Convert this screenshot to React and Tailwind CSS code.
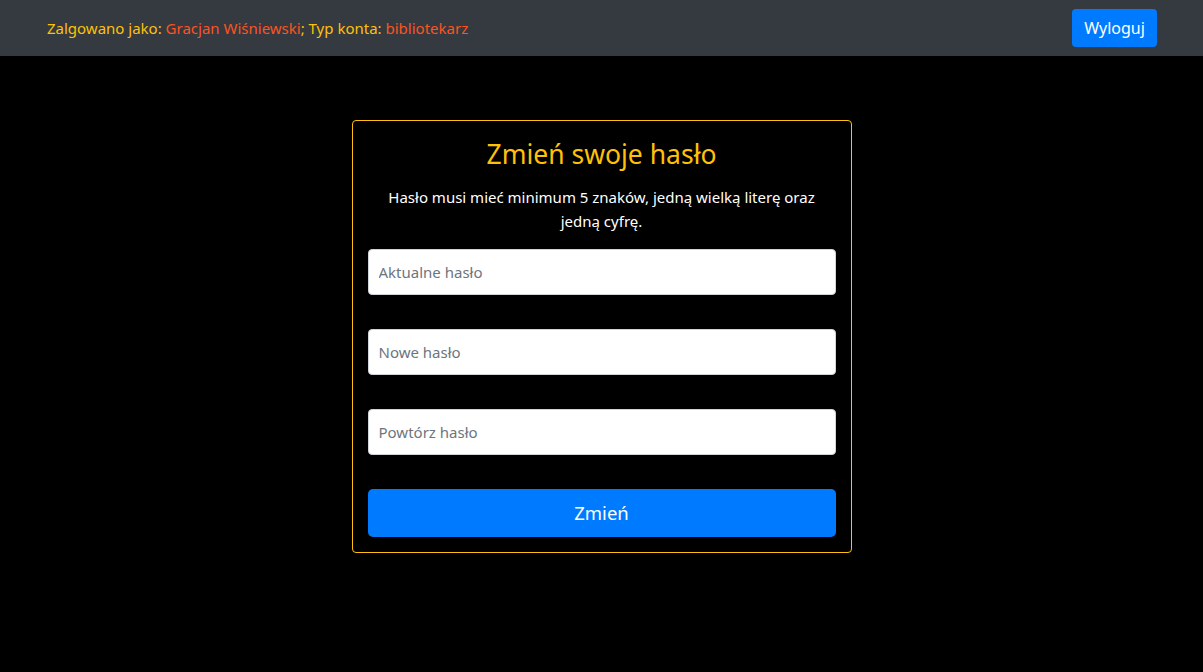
export default function App() {
  const font = { fontFamily: '"Noto Sans", "Open Sans", sans-serif' };
  return (
    <div className="min-h-[672px] bg-black" style={font}>
      <header className="h-14 bg-[#343a40] flex items-center justify-between pl-[47px] pr-[46px]">
        <div className="text-[15px] text-[#ffc107]">
          Zalgowano jako: <span className="text-[#fd5321]">Gracjan Wiśniewski</span>; Typ konta: <span className="text-[#fd5321]">bibliotekarz</span>
        </div>
        <button className="h-[38px] w-[85px] bg-[#007bff] text-white text-[16px] rounded-[4px]">Wyloguj</button>
      </header>
      <div className="flex justify-center pt-16">
        <div className="w-[500px] border border-[#ffc107] rounded-[4px] px-[15px] pt-[16px] pb-[15px]">
          <h3 className="text-[26.5px] leading-[34px] text-[#ffc107] text-center mb-[14px]">Zmień swoje hasło</h3>
          <p className="text-[15px] leading-6 text-white text-center mb-4 px-4">Hasło musi mieć minimum 5 znaków, jedną wielką literę oraz jedną cyfrę.</p>
          <div className="flex flex-col gap-[34px]">
            <input type="password" placeholder="Aktualne hasło" className="h-[46px] w-full bg-white border border-[#ced4da] rounded-[4px] px-[10px] text-[15px] placeholder:text-[#6c757d] outline-none" />
            <input type="password" placeholder="Nowe hasło" className="h-[46px] w-full bg-white border border-[#ced4da] rounded-[4px] px-[10px] text-[15px] placeholder:text-[#6c757d] outline-none" />
            <input type="password" placeholder="Powtórz hasło" className="h-[46px] w-full bg-white border border-[#ced4da] rounded-[4px] px-[10px] text-[15px] placeholder:text-[#6c757d] outline-none" />
            <button className="h-[48px] w-full bg-[#007bff] text-white text-[18.5px] rounded-[5px]">Zmień</button>
          </div>
        </div>
      </div>
    </div>
  );
}
